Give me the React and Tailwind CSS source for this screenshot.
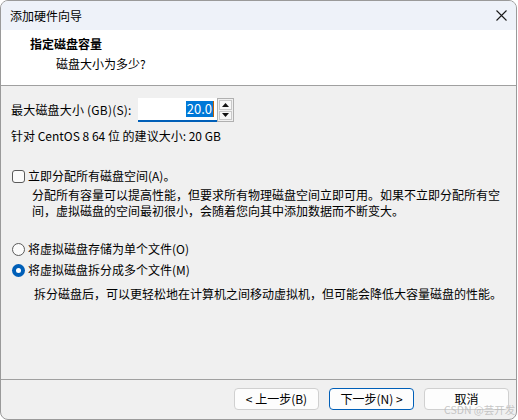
import React from "react";

const font = "font-['Microsoft_YaHei_UI','Noto_Sans_CJK_SC',sans-serif]";

function Checkbox() {
  return <span className="inline-block w-[13px] h-[13px] rounded-[3px] border border-[#5a5a5a] bg-[#fbfbfb] shrink-0" />;
}

function Radio({ checked }) {
  if (checked) {
    return (
      <span className="w-[13px] h-[13px] rounded-full bg-[#005fb8] flex items-center justify-center shrink-0">
        <span className="w-[5px] h-[5px] rounded-full bg-white" />
      </span>
    );
  }
  return <span className="inline-block w-[13px] h-[13px] rounded-full border border-[#5a5a5a] bg-[#fbfbfb] shrink-0" />;
}

function Btn({ children, def }) {
  return (
    <div
      className={
        "w-[85px] h-[22px] rounded-[4px] bg-[#fdfdfd] flex items-center justify-center text-[12px] text-black leading-none " +
        (def ? "border border-[#005fb8]" : "border border-[#d0d0d0]")
      }
    >
      {children}
    </div>
  );
}

export default function App() {
  return (
    <div className={"w-[518px] h-[420px] bg-white relative " + font}>
      <div className="w-[517px] h-[420px] border border-[#9a9a9a] rounded-[8px] overflow-hidden flex flex-col bg-[#f0f0f0]">
        {/* title bar */}
        <div className="h-[29px] bg-[#eef2f9] flex items-center justify-between pl-[9px] pr-[9px] shrink-0">
          <span className="text-[12px] text-black leading-none">添加硬件向导</span>
          <svg width="11" height="11" viewBox="0 0 11 11">
            <path d="M0.5 0.5 L10.5 10.5 M10.5 0.5 L0.5 10.5" stroke="#1a1a1a" strokeWidth="1.1" />
          </svg>
        </div>
        {/* header */}
        <div className="h-[56px] bg-white border-b border-[#a0a0a0] shrink-0 pl-[29px] pt-[6px]">
          <div className="h-[16px] flex items-center text-[12px] font-bold text-black">指定磁盘容量</div>
          <div className="h-[16px] mt-[4px] pl-[26px] flex items-center text-[12px] text-black">磁盘大小为多少?</div>
        </div>
        {/* body */}
        <div className="flex-1 flex flex-col pl-[10px] text-[12px] text-black">
          <div className="mt-[12px] h-[24px] flex items-center">
            <span className="w-[127px] tracking-[0.2px]">最大磁盘大小 (GB)(S):</span>
            <div className="w-[79px] h-[24px] bg-white border-b-[2px] border-[#005fb8] flex items-center justify-end pr-[3px]">
              <span className="bg-[#0078d7] text-white text-[13px] leading-[16px] px-[1px] h-[16px] flex items-center">20.0</span>
              <span className="w-[1px] h-[16px] bg-[#c06000]" />
            </div>
            <div className="w-[17px] h-[24px] border border-[#b0b0b0] bg-[#f0f0f0] flex flex-col p-[1px] gap-[1px]">
              <div className="flex-1 border border-[#c8c8c8] bg-[#f7f7f7] flex items-center justify-center">
                <svg width="7" height="4" viewBox="0 0 7 4"><path d="M3.5 0 L7 4 L0 4 Z" fill="#111" /></svg>
              </div>
              <div className="flex-1 border border-[#c8c8c8] bg-[#f7f7f7] flex items-center justify-center">
                <svg width="7" height="4" viewBox="0 0 7 4"><path d="M0 0 L7 0 L3.5 4 Z" fill="#111" /></svg>
              </div>
            </div>
          </div>
          <div className="mt-[6px] h-[16px] flex items-center">针对 CentOS 8 64 位 的建议大小: 20 GB</div>

          <div className="mt-[24px] h-[16px] flex items-center gap-[3px] pl-[1px]">
            <Checkbox />
            <span>立即分配所有磁盘空间(A)。</span>
          </div>
          <div className="mt-[3px] pl-[21px] leading-[16px] whitespace-nowrap">
            分配所有容量可以提高性能，但要求所有物理磁盘空间立即可用。如果不立即分配所有空
            <br />
            间，虚拟磁盘的空间最初很小，会随着您向其中添加数据而不断变大。
          </div>

          <div className="mt-[22px] h-[16px] flex items-center gap-[3px] pl-[1px]">
            <Radio />
            <span>将虚拟磁盘存储为单个文件(O)</span>
          </div>
          <div className="mt-[5px] h-[16px] flex items-center gap-[3px] pl-[1px]">
            <Radio checked />
            <span>将虚拟磁盘拆分成多个文件(M)</span>
          </div>
          <div className="mt-[8px] h-[16px] flex items-center pl-[23px] whitespace-nowrap">
            拆分磁盘后，可以更轻松地在计算机之间移动虚拟机，但可能会降低大容量磁盘的性能。
          </div>
        </div>
        {/* footer */}
        <div className="h-[40px] border-t border-[#a0a0a0] shrink-0 flex justify-end items-start pt-[8px] pr-[7px] gap-[10px]">
          <Btn>&lt; 上一步(B)</Btn>
          <Btn def>下一步(N) &gt;</Btn>
          <Btn>取消</Btn>
        </div>
      </div>
      <div className="absolute left-[444px] top-[403px] text-[10.5px] leading-[13px] text-[#b8b8b8]/80 whitespace-nowrap">CSDN @芸开发</div>
    </div>
  );
}
